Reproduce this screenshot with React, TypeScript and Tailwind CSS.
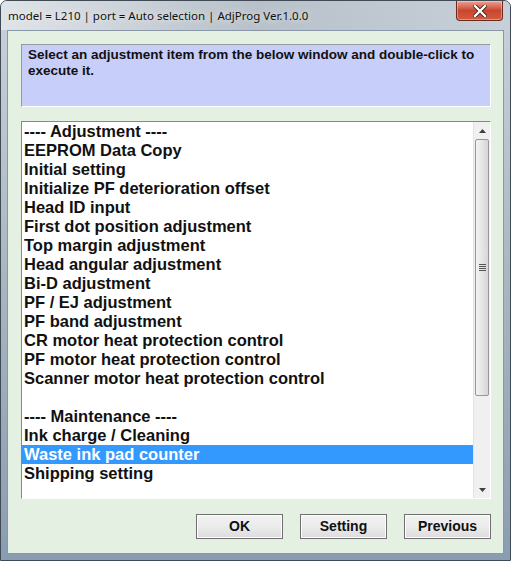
import React from "react";

const items: string[] = [
  "---- Adjustment ----",
  "EEPROM Data Copy",
  "Initial setting",
  "Initialize PF deterioration offset",
  "Head ID input",
  "First dot position adjustment",
  "Top margin adjustment",
  "Head angular adjustment",
  "Bi-D adjustment",
  "PF / EJ adjustment",
  "PF band adjustment",
  "CR motor heat protection control",
  "PF motor heat protection control",
  "Scanner motor heat protection control",
  "",
  "---- Maintenance ----",
  "Ink charge / Cleaning",
  "Waste ink pad counter",
  "Shipping setting",
];

const SELECTED = 17;

function CloseButton() {
  return (
    <div className="absolute right-[7px] top-0 flex h-[20px] w-[47px] items-center justify-center rounded-b-[4px] border border-t-0 border-[#6b2a20] bg-gradient-to-b from-[#e8a393] via-[#c9452e] to-[#d45c3d] shadow-[inset_0_0_0_1px_rgba(255,255,255,0.35)]">
      <svg width="14" height="12" viewBox="0 0 14 12">
        <path
          d="M2 1 L12 11 M12 1 L2 11"
          stroke="#3a1a14"
          strokeWidth="4"
          strokeLinecap="square"
        />
        <path
          d="M2 1 L12 11 M12 1 L2 11"
          stroke="#ffffff"
          strokeWidth="2.4"
          strokeLinecap="square"
        />
      </svg>
    </div>
  );
}

function Button({ label }: { label: string }) {
  return (
    <div className="flex h-[25px] w-[87px] items-center justify-center border border-[#707070] bg-gradient-to-b from-[#f2f2f2] via-[#ebebeb] to-[#dddddd] text-[14px] font-bold text-[#111] shadow-[inset_0_0_0_1px_#fcfcfc]">
      {label}
    </div>
  );
}

function ScrollBar() {
  return (
    <div className="flex w-[17px] flex-col border-l border-[#e3e3e3] bg-[#f0f0f0]">
      <div className="flex h-[17px] items-center justify-center">
        <svg width="7" height="4" viewBox="0 0 7 4">
          <path d="M0 4 L3.5 0 L7 4 Z" fill="#404040" />
        </svg>
      </div>
      <div className="mx-[1px] flex h-[257px] items-center justify-center rounded-[2px] border border-[#979797] bg-gradient-to-r from-[#f3f3f3] via-[#e6e6e6] to-[#d6d6d6]">
        <div className="flex flex-col gap-[1px]">
          <div className="h-[1px] w-[7px] bg-[#555]" />
          <div className="h-[1px] w-[7px] bg-[#555]" />
          <div className="h-[1px] w-[7px] bg-[#555]" />
          <div className="h-[1px] w-[7px] bg-[#555]" />
        </div>
      </div>
      <div className="flex-1" />
      <div className="flex h-[17px] items-center justify-center">
        <svg width="7" height="4" viewBox="0 0 7 4">
          <path d="M0 0 L3.5 4 L7 0 Z" fill="#404040" />
        </svg>
      </div>
    </div>
  );
}

export default function App() {
  return (
    <div className="relative flex h-[561px] w-[511px] flex-col overflow-hidden rounded-t-[7px] border border-[#3f4a55] bg-gradient-to-b from-[#c9d2da] via-[#a9b6c2] to-[#8a9db0] font-['Liberation_Sans',Arial,sans-serif]">
      {/* title bar */}
      <div className="relative flex h-[29px] shrink-0 items-center pl-[7px] bg-gradient-to-r from-[#dfe4e8] via-[#b8c1c9] to-[#c7d0d8]">
        <span className="font-['Noto_Sans',sans-serif] text-[11.5px] text-[#111] [text-shadow:0_0_6px_rgba(255,255,255,0.9)]">
          model = L210 | port = Auto selection | AdjProg Ver.1.0.0
        </span>
        <CloseButton />
      </div>

      {/* client area */}
      <div className="mx-[6px] mb-[6px] flex flex-1 flex-col border border-[#8898a8] bg-[#e4f1e2] px-[13px] pt-[13px]">
        <div className="h-[63px] w-[470px] border border-t-[#9a9a9a] border-l-[#9a9a9a] border-r-[#ffffff] border-b-[#ffffff] bg-[#c8cefa] px-[6px] pt-[2px] text-[13.5px] font-bold leading-[16px] text-[#111]">
          Select an adjustment item from the below window and double-click to execute it.
        </div>

        <div className="mt-[14px] flex h-[378px] w-[470px] border border-t-[#828790] border-l-[#828790] border-r-[#ffffff] border-b-[#ffffff] bg-white">
          <div className="flex-1">
            {items.map((t, i) => (
              <div
                key={i}
                className={`h-[19px] pl-[2px] text-[16.5px] font-bold leading-[19px] ${
                  i === SELECTED ? "bg-[#3399ff] text-white" : "text-[#111]"
                }`}
              >
                {t || "\u00a0"}
              </div>
            ))}
          </div>
          <ScrollBar />
        </div>

        <div className="-mr-[1px] mt-[15px] flex justify-end gap-[17px]">
          <Button label="OK" />
          <Button label="Setting" />
          <Button label="Previous" />
        </div>
      </div>
    </div>
  );
}
